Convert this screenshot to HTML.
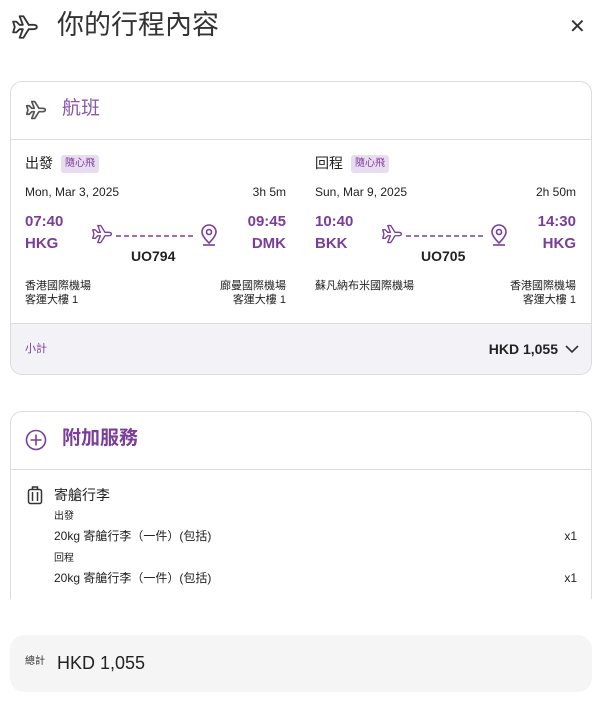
<!DOCTYPE html>
<html><head><meta charset="utf-8"><style>
*{margin:0;padding:0;box-sizing:border-box}
body{width:600px;height:720px;background:#fff;font-family:"Liberation Sans","Noto Sans CJK TC",sans-serif;color:#222;position:relative;overflow:hidden}
.a{position:absolute;white-space:nowrap;line-height:1}
.p{color:#7a3d99}
.card{position:absolute;left:10px;width:582px;border:1px solid #dcdcdc;border-radius:12px;overflow:hidden;background:#fff}
.tag{position:absolute;background:#e8dcf0;color:#7a3d99;font-size:10px;border-radius:3px;padding:3px 4px;line-height:12px}
.b{font-weight:bold}
</style></head><body>
<svg width="0" height="0" style="position:absolute"><defs><path id="pl" d="M2 8 L5 8 L8 11 L11 11 L8 3 L11.5 3 L16.5 11 L20.5 11 Q24 11 24 13 Q24 15 20.5 15 L16.5 15 L11.5 23 L8 23 L11 15 L8 15 L5 18 L2 18 L3.5 13 Z"/></defs></svg>
<svg class="a" style="left:9px;top:13px" width="32" height="28" viewBox="0 0 26 26" fill="none" stroke="#333" stroke-width="1.7" stroke-linejoin="round"><use href="#pl"/></svg>
<div class="a" style="left:57px;top:12px;font-size:27px;color:#333">你的行程內容</div>
<div class="a" style="left:569px;top:17px;font-size:20px;color:#333">✕</div>

<div class="card" style="top:81px;height:294px">
  <svg class="a" style="left:14px;top:17px" width="22" height="22" viewBox="0 0 26 26" fill="none" stroke="#555" stroke-width="2" stroke-linejoin="round"><use href="#pl"/></svg>
  <div class="a" style="left:51px;top:17px;font-size:19px;color:#8a5aa8">航班</div>
  <div class="a" style="left:0;top:57px;width:582px;height:1px;background:#dcdcdc"></div>

  <div class="a" style="left:14px;top:74px;font-size:14px">出發</div>
  <div class="tag" style="left:50px;top:73px">隨心飛</div>
  <div class="a" style="left:14px;top:104px;font-size:12px">Mon, Mar 3, 2025</div>
  <div class="a" style="right:305px;top:104px;font-size:12px">3h 5m</div>
  <div class="a p b" style="left:14px;top:132px;font-size:15px">07:40</div>
  <div class="a p b" style="left:14px;top:154px;font-size:15px">HKG</div>
  <div class="a p b" style="right:305px;top:132px;font-size:15px">09:45</div>
  <div class="a p b" style="right:305px;top:154px;font-size:15px">DMK</div>
  <svg class="a" style="left:80px;top:142px" width="130" height="24" viewBox="0 0 130 24" fill="none" stroke="#7a3d99" stroke-width="1.6" stroke-linejoin="round"><use href="#pl" transform="translate(0,-1) scale(0.85)"/><path d="M25 12 H105" stroke-dasharray="5 3"/><path d="M118 19 C112 13 111 10 111 8 A7 7 0 0 1 125 8 C125 10 124 13 118 19Z"/><circle cx="118" cy="8" r="2.5"/><path d="M112 21 H124"/></svg>
  <div class="a b" style="left:120px;top:167px;font-size:14px">UO794</div>
  <div class="a" style="left:14px;top:199px;font-size:11px">香港國際機場</div>
  <div class="a" style="left:14px;top:213px;font-size:11px">客運大樓 1</div>
  <div class="a" style="right:305px;top:199px;font-size:11px">廊曼國際機場</div>
  <div class="a" style="right:305px;top:213px;font-size:11px">客運大樓 1</div>

  <div class="a" style="left:304px;top:74px;font-size:14px">回程</div>
  <div class="tag" style="left:340px;top:73px">隨心飛</div>
  <div class="a" style="left:304px;top:104px;font-size:12px">Sun, Mar 9, 2025</div>
  <div class="a" style="right:15px;top:104px;font-size:12px">2h 50m</div>
  <div class="a p b" style="left:304px;top:132px;font-size:15px">10:40</div>
  <div class="a p b" style="left:304px;top:154px;font-size:15px">BKK</div>
  <div class="a p b" style="right:15px;top:132px;font-size:15px">14:30</div>
  <div class="a p b" style="right:15px;top:154px;font-size:15px">HKG</div>
  <svg class="a" style="left:370px;top:142px" width="130" height="24" viewBox="0 0 130 24" fill="none" stroke="#7a3d99" stroke-width="1.6" stroke-linejoin="round"><use href="#pl" transform="translate(0,-1) scale(0.85)"/><path d="M25 12 H105" stroke-dasharray="5 3"/><path d="M118 19 C112 13 111 10 111 8 A7 7 0 0 1 125 8 C125 10 124 13 118 19Z"/><circle cx="118" cy="8" r="2.5"/><path d="M112 21 H124"/></svg>
  <div class="a b" style="left:410px;top:167px;font-size:14px">UO705</div>
  <div class="a" style="left:304px;top:199px;font-size:11px">蘇凡納布米國際機場</div>
  <div class="a" style="right:15px;top:199px;font-size:11px">香港國際機場</div>
  <div class="a" style="right:15px;top:213px;font-size:11px">客運大樓 1</div>

  <div class="a" style="left:0;top:241px;width:582px;height:53px;background:#f3f2f7;border-top:1px solid #dcdcdc"></div>
  <div class="a p" style="left:14px;top:262px;font-size:11px">小計</div>
  <div class="a b" style="right:33px;top:260px;font-size:14px">HKD 1,055</div>
  <svg class="a" style="left:554px;top:262px" width="14" height="10" viewBox="0 0 14 10" fill="none" stroke="#333" stroke-width="1.6"><path d="M1 2 L7 8 L13 2"/></svg>
</div>

<div class="card" style="top:411px;height:200px">
  <svg class="a" style="left:14px;top:17px" width="22" height="22" viewBox="0 0 22 22" fill="none" stroke="#7a3d99" stroke-width="1.6"><circle cx="11" cy="11" r="9.5"/><path d="M11 5.5 V16.5 M5.5 11 H16.5"/></svg>
  <div class="a p b" style="left:51px;top:17px;font-size:19px">附加服務</div>
  <div class="a" style="left:0;top:57px;width:582px;height:1px;background:#dcdcdc"></div>
  <svg class="a" style="left:16px;top:74px" width="16" height="19" viewBox="0 0 16 19" fill="none" stroke="#333" stroke-width="1.5"><rect x="1.5" y="3.5" width="13" height="14" rx="2"/><path d="M5.5 3.5 V1 H10.5 V3.5 M5.5 6 V15 M10.5 6 V15"/></svg>
  <div class="a" style="left:43px;top:76px;font-size:14px">寄艙行李</div>
  <div class="a" style="left:43px;top:100px;font-size:10px">出發</div>
  <div class="a" style="left:43px;top:118px;font-size:12px">20kg 寄艙行李（一件）(包括)</div>
  <div class="a" style="right:14px;top:118px;font-size:12px">x1</div>
  <div class="a" style="left:43px;top:142px;font-size:10px">回程</div>
  <div class="a" style="left:43px;top:160px;font-size:12px">20kg 寄艙行李（一件）(包括)</div>
  <div class="a" style="right:14px;top:160px;font-size:12px">x1</div>
</div>
<div class="a" style="left:0;top:599px;width:600px;height:30px;background:#fff"></div>

<div class="a" style="left:10px;top:635px;width:582px;height:57px;background:#f5f5f5;border-radius:14px"></div>
<div class="a" style="left:25px;top:657px;font-size:10px;color:#333">總計</div>
<div class="a" style="left:57px;top:654px;font-size:18px;color:#222">HKD 1,055</div>
</body></html>
